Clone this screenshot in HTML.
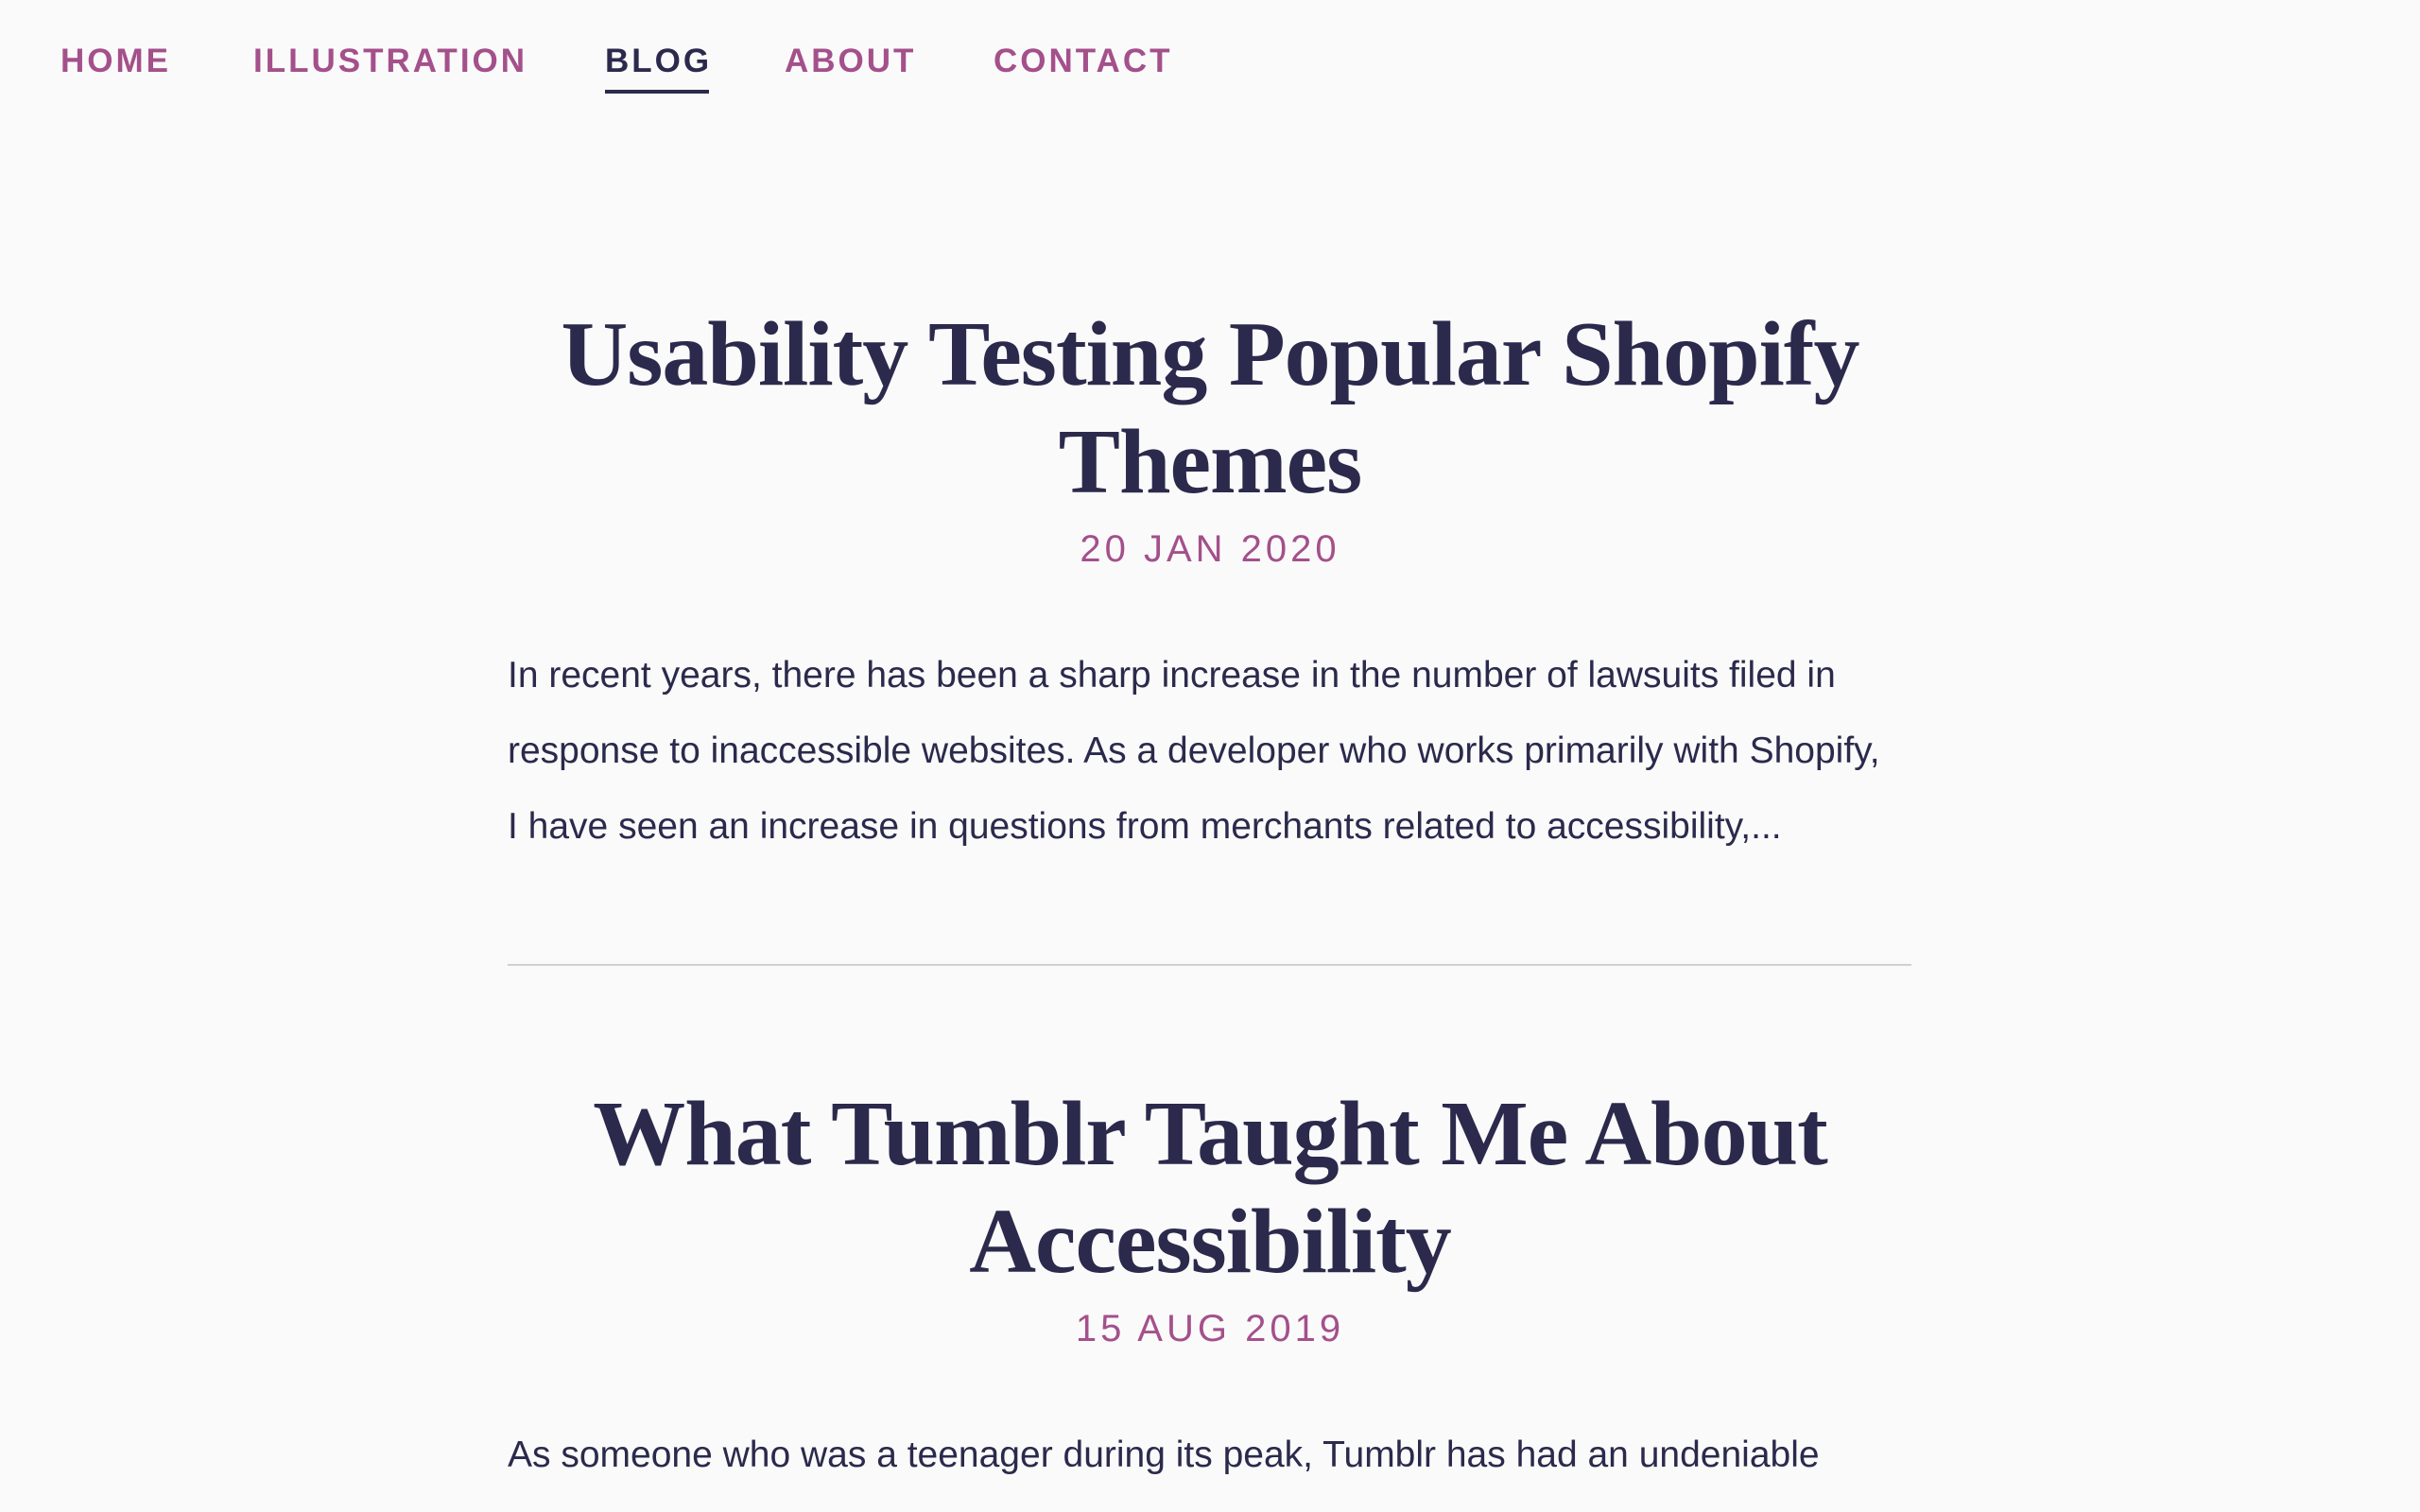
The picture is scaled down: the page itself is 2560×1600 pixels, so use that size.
<!DOCTYPE html>
<html><head><meta charset="utf-8"><style>
html,body{margin:0;background:#fafafa;width:2560px;height:1600px;overflow:hidden}
body{position:relative;font-family:"Liberation Sans",sans-serif;color:#2b2a4c}
.nav a{position:absolute;top:40px;font-size:35px;font-weight:bold;letter-spacing:3px;color:#a4508b;text-decoration:none;line-height:50px}
.nav a.on{color:#2b2a4c}
.ul{position:absolute;left:640px;top:95px;width:110px;height:4px;background:#2b2a4c}
h1{position:absolute;left:0;width:2560px;margin:0;text-align:center;font-family:"Liberation Serif",serif;font-weight:bold;font-size:98px;line-height:114px;letter-spacing:-1px}
.d{position:absolute;left:0;width:2560px;text-align:center;color:#a4508b;font-size:40px;letter-spacing:4px;line-height:50px}
p{position:absolute;left:537px;width:1462px;margin:0;font-size:39px;line-height:80px}
hr{position:absolute;left:537px;top:1020px;width:1485px;margin:0;border:0;border-top:2px solid #d0d0d0}
</style></head><body>
<div class="nav">
<a style="left:64px">HOME</a>
<a style="left:268px">ILLUSTRATION</a>
<a class="on" style="left:640px">BLOG</a>
<a style="left:830px">ABOUT</a>
<a style="left:1051px">CONTACT</a>
</div>
<div class="ul"></div>
<h1 style="top:318px">Usability Testing Popular Shopify<br>Themes</h1>
<div class="d" style="top:556px">20 JAN 2020</div>
<p style="top:675px">In recent years, there has been a sharp increase in the number of lawsuits filed in response to inaccessible websites. As a developer who works primarily with Shopify, I have seen an increase in questions from merchants related to accessibility,...</p>
<hr>
<h1 style="top:1143px">What Tumblr Taught Me About<br>Accessibility</h1>
<div class="d" style="top:1381px">15 AUG 2019</div>
<p style="top:1500px">As someone who was a teenager during its peak, Tumblr has had an undeniable</p>
</body></html>
